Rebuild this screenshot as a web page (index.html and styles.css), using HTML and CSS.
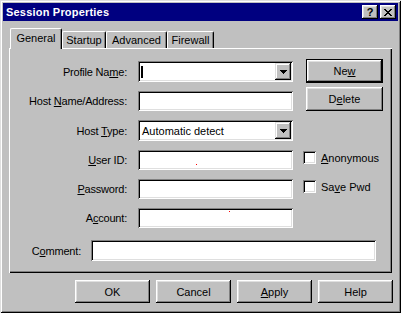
FILE: index.html
```html
<!DOCTYPE html>
<html lang="en">

<head>
    <meta charset="UTF-8">
    <title>Session Properties</title>
    <link rel="stylesheet" href="styles.css">
</head>

<body>
    <div class="window">
        <div class="titlebar">
            <span class="title">Session Properties</span>
            <span class="tbtn">?</span>
            <span class="tbtn">
                <svg width="8" height="7" viewBox="0 0 8 7" shape-rendering="crispEdges">
                    <path d="M0 0h2v1H0zM6 0h2v1H6zM1 1h2v1H1zM5 1h2v1H5zM2 2h4v1H2zM3 3h2v1H3zM2 4h4v1H2zM1 5h2v1H1zM5 5h2v1H5zM0 6h2v1H0zM6 6h2v1H6z" fill="#000"/>
                </svg>
            </span>
        </div>

        <div class="tabs">
            <div class="tab active tab-general">General</div>
            <div class="tab tab-startup">Startup</div>
            <div class="tab tab-advanced">Advanced</div>
            <div class="tab tab-firewall">Firewall</div>
        </div>

        <div class="panel">
            <div class="form">
                <label class="lbl">Profile Na<u>m</u>e:</label>
                <div class="edit combo">
                    <span class="caret"></span>
                    <span class="drop">
                        <svg width="7" height="4" viewBox="0 0 7 4" shape-rendering="crispEdges">
                            <path d="M0 0h7v1H0zM1 1h5v1H1zM2 2h3v1H2zM3 3h1v1H3z" fill="#000"/>
                        </svg>
                    </span>
                </div>
                <div class="side-buttons">
                    <span class="btn default">Ne<u>w</u></span>
                    <span class="btn">D<u>e</u>lete</span>
                </div>

                <label class="lbl">Host <u>N</u>ame/Address:</label>
                <div class="edit"></div>

                <label class="lbl">Host <u>T</u>ype:</label>
                <div class="edit combo">
                    <span class="value">Automatic detect</span>
                    <span class="drop">
                        <svg width="7" height="4" viewBox="0 0 7 4" shape-rendering="crispEdges">
                            <path d="M0 0h7v1H0zM1 1h5v1H1zM2 2h3v1H2zM3 3h1v1H3z" fill="#000"/>
                        </svg>
                    </span>
                </div>

                <label class="lbl"><u>U</u>ser ID:</label>
                <div class="edit"><span class="dot dot-user"></span></div>
                <label class="check-row"><span class="check"></span><span><u>A</u>nonymous</span></label>

                <label class="lbl"><u>P</u>assword:</label>
                <div class="edit"></div>
                <label class="check-row"><span class="check"></span><span>Sa<u>v</u>e Pwd</span></label>

                <label class="lbl">A<u>c</u>count:</label>
                <div class="edit"><span class="dot dot-account"></span></div>
            </div>

            <div class="comment-row">
                <label class="lbl comment-lbl">C<u>o</u>mment:</label>
                <div class="edit comment"></div>
            </div>
        </div>

        <div class="buttons">
            <span class="btn wide">OK</span>
            <span class="btn wide">Cancel</span>
            <span class="btn wide"><u>A</u>pply</span>
            <span class="btn wide">Help</span>
        </div>
    </div>
</body>

</html>
```

FILE: styles.css
```css
* {
    margin: 0;
    padding: 0;
    box-sizing: border-box;
}

body {
    background: #c0c0c0;
    font-family: "Liberation Sans", Arial, sans-serif;
    font-size: 11px;
    color: #000;
}

u {
    text-decoration: underline;
    text-underline-offset: 1px;
}

.window {
    width: 401px;
    height: 313px;
    padding: 3px;
    background: #c0c0c0;
    box-shadow: inset 1px 1px #dfdfdf, inset -1px -1px #000, inset 2px 2px #fff, inset -2px -2px #808080;
}

/* title bar */
.titlebar {
    height: 18px;
    display: flex;
    align-items: center;
    padding: 0 2px 0 3px;
    background: #000080;
    color: #fff;
    font-weight: bold;
}

.title {
    flex: 1;
    letter-spacing: 0.2px;
}

.tbtn {
    width: 16px;
    height: 14px;
    display: flex;
    align-items: center;
    justify-content: center;
    background: #c0c0c0;
    color: #000;
    font-size: 11px;
    box-shadow: inset -1px -1px #000, inset 1px 1px #fff, inset -2px -2px #808080, inset 2px 2px #dfdfdf;
}

.tbtn + .tbtn {
    margin-left: 2px;
}

/* tabs */
.tabs {
    height: 27px;
    display: flex;
    align-items: flex-end;
    padding-left: 7px;
}

.tab {
    height: 17px;
    line-height: 16px;
    text-align: center;
    border-top: 1px solid #fff;
    border-left: 1px solid #fff;
    border-right: 1px solid #000;
    border-radius: 2px 2px 0 0;
    box-shadow: inset -1px 0 #808080;
}

.tab.active {
    height: 21px;
    line-height: 19px;
    margin-bottom: -1px;
    position: relative;
    z-index: 1;
    background: #c0c0c0;
}

.tab-general { width: 52px; }
.tab-startup { width: 44px; }
.tab-advanced { width: 61px; }
.tab-firewall { width: 47px; }

/* panel */
.panel {
    height: 225px;
    margin: 0 6px;
    padding: 13px 0 0 1px;
    box-shadow: inset 1px 1px #fff, inset -1px -1px #000, inset -2px -2px #808080;
}

.form {
    display: grid;
    grid-template-columns: 117px 155px 79px;
    grid-template-rows: 21px 20px 21px 20px 20px 20px;
    column-gap: 11px;
    row-gap: 9px;
}

.lbl {
    grid-column: 1;
    text-align: right;
    align-self: center;
    white-space: nowrap;
    letter-spacing: -0.2px;
}

.edit {
    grid-column: 2;
    position: relative;
    display: flex;
    align-items: center;
    padding: 0 4px;
    background: #fff;
    box-shadow: inset 1px 1px #808080, inset -1px -1px #fff, inset 2px 2px #000, inset -2px -2px #dfdfdf;
}

.combo {
    padding-right: 2px;
}

.combo .value {
    flex: 1;
}

.caret {
    width: 2px;
    height: 12px;
    margin-left: -1px;
    background: #000;
}

.drop {
    width: 16px;
    height: 17px;
    margin-left: auto;
    display: flex;
    align-items: center;
    justify-content: center;
    background: #c0c0c0;
    box-shadow: inset -1px -1px #000, inset 1px 1px #dfdfdf, inset -2px -2px #808080, inset 2px 2px #fff;
}

.dot {
    position: absolute;
    width: 1px;
    height: 1px;
    background: #f00;
}

.dot-user {
    left: 58px;
    top: 14px;
}

.dot-account {
    left: 91px;
    top: 3px;
}

.side-buttons {
    grid-column: 3;
    grid-row: 1 / span 2;
    justify-self: end;
    margin-top: -2px;
    display: flex;
    flex-direction: column;
    gap: 4px;
}

.btn {
    width: 77px;
    height: 24px;
    display: flex;
    align-items: center;
    justify-content: center;
    background: #c0c0c0;
    box-shadow: inset -1px -1px #000, inset 1px 1px #fff, inset -2px -2px #808080, inset 2px 2px #dfdfdf;
}

.btn.default {
    border: 1px solid #000;
}

.check-row {
    grid-column: 3;
    align-self: start;
    margin: 1px 0 0 -1px;
    display: flex;
    align-items: center;
    gap: 5px;
}

.check {
    width: 13px;
    height: 13px;
    background: #fff;
    box-shadow: inset 1px 1px #808080, inset -1px -1px #fff, inset 2px 2px #000, inset -2px -2px #dfdfdf;
}

.comment-row {
    display: flex;
    align-items: center;
    gap: 10px;
    margin-top: 12px;
}

.comment-lbl {
    width: 71px;
}

.comment {
    width: 285px;
    height: 21px;
}

/* bottom buttons */
.buttons {
    display: flex;
    justify-content: flex-end;
    gap: 6px;
    padding: 7px 5px 0 0;
}

.btn.wide {
    width: 75px;
    height: 23px;
}
```
